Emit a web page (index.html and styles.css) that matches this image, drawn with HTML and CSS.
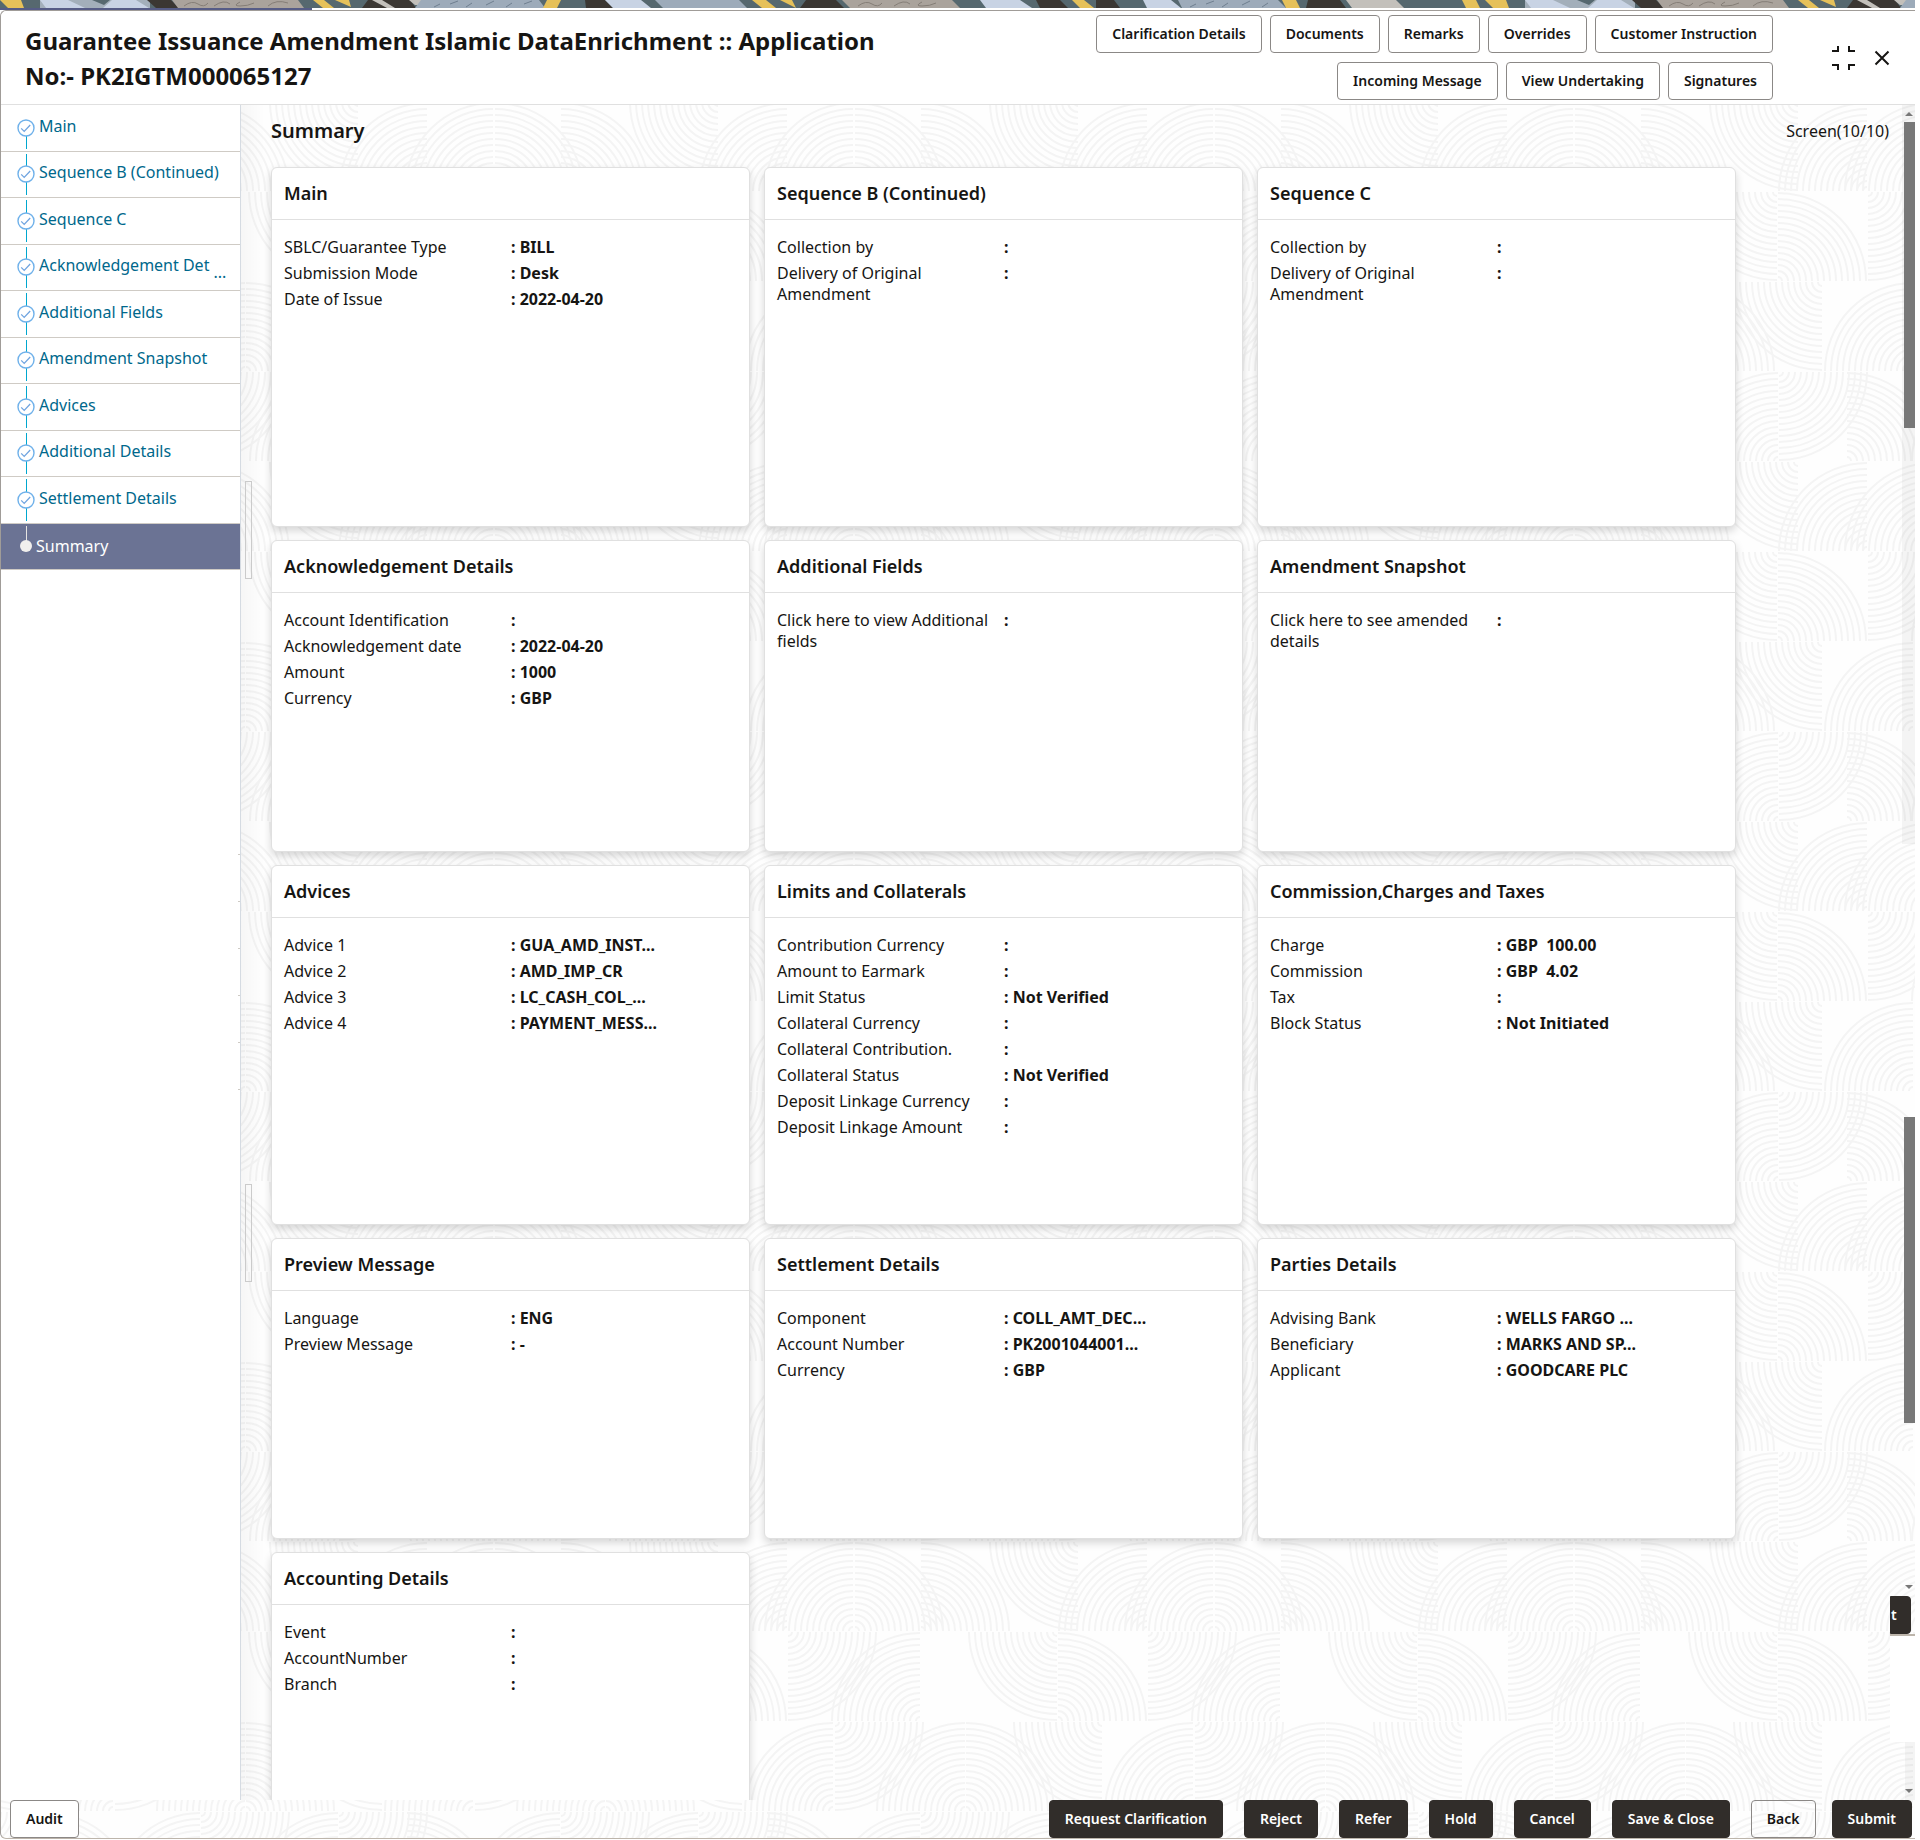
FILE: index.html
```html
<!DOCTYPE html>
<html lang="en">
<head>
<meta charset="utf-8">
<title>Guarantee Issuance Amendment Islamic</title>
<link rel="stylesheet" href="styles.css">
</head>
<body>
<svg class="defs" width="0" height="0" aria-hidden="true">
  <symbol id="done" viewBox="0 0 18 18">
    <circle cx="9" cy="9" r="8" fill="#fff" stroke="#6fb1ea" stroke-width="1.4"/>
    <path d="M4.2 9.4l3 3 6-6.4" fill="none" stroke="#6fa4e0" stroke-width="1.3"/>
  </symbol>
</svg>

<div class="banner" aria-hidden="true">
  <svg width="100%" height="8">
    <defs>
      <g id="art">
        <path fill="#a3afba" d="M40 0h110v8H40z"/>
        <path fill="#e6c15a" d="M0 0h21l3 8H8z"/>
        <path fill="#c8d3e4" d="M40 0h28l17 8H46zM112 0h24l13 8h-46z"/>
        <path fill="#56686f" d="M92 0h18l-6 5z"/>
        <path fill="#3b3733" d="M147 0h24l8 8h-23z"/>
        <path fill="#aaa39c" d="M172 0h126l6 8H178z"/>
        <path fill="none" stroke="#857e77" d="M184 6q8-6 14-2t10-1M214 6q10-7 16-2M240 2q-8 4 0 4t14-3M268 6q8-7 20-3"/>
        <path fill="#e6c15a" d="M313 0h11l10 8h-11zM335 0h14l2 7z"/>
        <path fill="#3b3733" d="M368 0h42l6 8h-54z"/>
        <path fill="#c3c0bb" d="M372 0h10l13 8h-8zM409 0h12v5h-6z"/>
        <path fill="#9dabba" d="M421 0h118l6 8H415z"/>
        <path stroke="#6f7f90" d="M434 7l6-3M450 4l8-3M466 7l6-4M486 5l8-4M506 7l6-4M524 4l8-3"/>
        <path fill="#e6c15a" d="M547 0h14l-4 8h-14z"/>
        <path fill="#3b3733" d="M585 0h20l8 8h-27z"/>
        <path fill="#c8d3e4" d="M605 0h36l10 8h-38z"/>
        <path fill="#9dabba" d="M655 0h84l8 8h-84z"/>
        <path fill="#e6c15a" d="M752 0h14l10 8h-14zM780 0h12l4 8z"/>
        <path fill="#3b3733" d="M806 0h30l8 8h-44z"/>
        <path fill="#aaa39c" d="M842 0h110l8 8H850z"/>
        <path fill="none" stroke="#857e77" d="M858 6q8-6 14-2t10-1M894 6q10-7 16-2M922 2q-8 4 0 4t14-3"/>
        <path fill="#c8d3e4" d="M980 0h40l12 8h-46z"/>
        <path fill="#3b3733" d="M1036 0h24l8 8h-28z"/>
        <path fill="#e6c15a" d="M1072 0h12l10 8h-14z"/>
        <path fill="#3b3733" d="M1096 0h18l6 8h-24z"/>
        <path fill="#c8d3e4" d="M1143 0h28l10 8h-34z"/>
        <path fill="#9dabba" d="M1178 0h100l8 8h-104z"/>
        <path stroke="#6f7f90" d="M1190 7l6-3M1206 4l8-3M1222 7l6-4M1242 5l8-4M1262 7l6-4"/>
        <path fill="#e6c15a" d="M1282 0h14l4 8h-14z"/>
        <path fill="#3b3733" d="M1308 0h32l6 8h-40z"/>
        <path fill="#c3c0bb" d="M1346 0h50l8 8h-52z"/>
        <path fill="#e6c15a" d="M1462 0h14l4 8h-14z"/>
      </g>
    </defs>
    <rect width="100%" height="8" fill="#56686f"/>
    <use href="#art"/>
    <use href="#art" x="1485"/>
  </svg>
</div>

<div class="window">
  <header class="top">
    <h1>Guarantee Issuance Amendment Islamic DataEnrichment :: Application No:- PK2IGTM000065127</h1>
    <div class="actions">
      <button class="btn">Clarification Details</button>
      <button class="btn">Documents</button>
      <button class="btn">Remarks</button>
      <button class="btn">Overrides</button>
      <button class="btn">Customer Instruction</button>
      <button class="btn">Incoming Message</button>
      <button class="btn">View Undertaking</button>
      <button class="btn">Signatures</button>
    </div>
    <div class="tools">
      <button class="tool" aria-label="Collapse">
        <svg width="24" height="24" viewBox="0 0 24 24" fill="none" stroke="#161513" stroke-width="2"><path d="M6 0v5H0M17 0v5h6M0 19h6v5M23 19h-6v5"/></svg>
      </button>
      <button class="tool" aria-label="Close">
        <svg width="16" height="16" viewBox="0 0 16 16" fill="none" stroke="#161513" stroke-width="2"><path d="M1.500 1.500l13 13M14.500 1.500l-13 13"/></svg>
      </button>
    </div>
  </header>

  <div class="middle">
    <nav class="side">
      <ol class="steps">
        <li><svg class="mark"><use href="#done"/></svg><a href="#main">Main</a></li>
        <li><svg class="mark"><use href="#done"/></svg><a href="#seqb">Sequence B (Continued)</a></li>
        <li><svg class="mark"><use href="#done"/></svg><a href="#seqc">Sequence C</a></li>
        <li><svg class="mark"><use href="#done"/></svg><a href="#ack">Acknowledgement Det</a><span class="more">...</span></li>
        <li><svg class="mark"><use href="#done"/></svg><a href="#fields">Additional Fields</a></li>
        <li><svg class="mark"><use href="#done"/></svg><a href="#snap">Amendment Snapshot</a></li>
        <li><svg class="mark"><use href="#done"/></svg><a href="#advices">Advices</a></li>
        <li><svg class="mark"><use href="#done"/></svg><a href="#limits">Additional Details</a></li>
        <li><svg class="mark"><use href="#done"/></svg><a href="#settle">Settlement Details</a></li>
        <li class="current"><span class="dot"></span><a href="#summary" aria-current="step">Summary</a></li>
      </ol>
      <span class="ticks"></span>
    </nav>

    <main class="content" id="summary">
      <div class="heading">
        <h2>Summary</h2>
        <span>Screen(10/10)</span>
      </div>
      <div class="cards">
        <section class="card" id="main"><h3>Main</h3>
          <dl>
            <div><dt>SBLC/Guarantee Type</dt><dd>: BILL</dd></div>
            <div><dt>Submission Mode</dt><dd>: Desk</dd></div>
            <div><dt>Date of Issue</dt><dd>: 2022-04-20</dd></div>
          </dl></section>
        <section class="card" id="seqb"><h3>Sequence B (Continued)</h3>
          <dl>
            <div><dt>Collection by</dt><dd>:</dd></div>
            <div><dt>Delivery of Original Amendment</dt><dd>:</dd></div>
          </dl></section>
        <section class="card" id="seqc"><h3>Sequence C</h3>
          <dl>
            <div><dt>Collection by</dt><dd>:</dd></div>
            <div><dt>Delivery of Original Amendment</dt><dd>:</dd></div>
          </dl></section>
        <section class="card" id="ack"><h3>Acknowledgement Details</h3>
          <dl>
            <div><dt>Account Identification</dt><dd>:</dd></div>
            <div><dt>Acknowledgement date</dt><dd>: 2022-04-20</dd></div>
            <div><dt>Amount</dt><dd>: 1000</dd></div>
            <div><dt>Currency</dt><dd>: GBP</dd></div>
          </dl></section>
        <section class="card" id="fields"><h3>Additional Fields</h3>
          <dl>
            <div><dt>Click here to view Additional fields</dt><dd>:</dd></div>
          </dl></section>
        <section class="card" id="snap"><h3>Amendment Snapshot</h3>
          <dl>
            <div><dt>Click here to see amended details</dt><dd>:</dd></div>
          </dl></section>
        <section class="card" id="advices"><h3>Advices</h3>
          <dl>
            <div><dt>Advice 1</dt><dd>: GUA_AMD_INST...</dd></div>
            <div><dt>Advice 2</dt><dd>: AMD_IMP_CR</dd></div>
            <div><dt>Advice 3</dt><dd>: LC_CASH_COL_...</dd></div>
            <div><dt>Advice 4</dt><dd>: PAYMENT_MESS...</dd></div>
          </dl></section>
        <section class="card" id="limits"><h3>Limits and Collaterals</h3>
          <dl>
            <div><dt>Contribution Currency</dt><dd>:</dd></div>
            <div><dt>Amount to Earmark</dt><dd>:</dd></div>
            <div><dt>Limit Status</dt><dd>: Not Verified</dd></div>
            <div><dt>Collateral Currency</dt><dd>:</dd></div>
            <div><dt>Collateral Contribution.</dt><dd>:</dd></div>
            <div><dt>Collateral Status</dt><dd>: Not Verified</dd></div>
            <div><dt>Deposit Linkage Currency</dt><dd>:</dd></div>
            <div><dt>Deposit Linkage Amount</dt><dd>:</dd></div>
          </dl></section>
        <section class="card"><h3>Commission,Charges and Taxes</h3>
          <dl>
            <div><dt>Charge</dt><dd>: GBP  100.00</dd></div>
            <div><dt>Commission</dt><dd>: GBP  4.02</dd></div>
            <div><dt>Tax</dt><dd>:</dd></div>
            <div><dt>Block Status</dt><dd>: Not Initiated</dd></div>
          </dl></section>
        <section class="card"><h3>Preview Message</h3>
          <dl>
            <div><dt>Language</dt><dd>: ENG</dd></div>
            <div><dt>Preview Message</dt><dd>: -</dd></div>
          </dl></section>
        <section class="card" id="settle"><h3>Settlement Details</h3>
          <dl>
            <div><dt>Component</dt><dd>: COLL_AMT_DEC...</dd></div>
            <div><dt>Account Number</dt><dd>: PK2001044001...</dd></div>
            <div><dt>Currency</dt><dd>: GBP</dd></div>
          </dl></section>
        <section class="card"><h3>Parties Details</h3>
          <dl>
            <div><dt>Advising Bank</dt><dd>: WELLS FARGO ...</dd></div>
            <div><dt>Beneficiary</dt><dd>: MARKS AND SP...</dd></div>
            <div><dt>Applicant</dt><dd>: GOODCARE PLC</dd></div>
          </dl></section>
        <section class="card"><h3>Accounting Details</h3>
          <dl>
            <div><dt>Event</dt><dd>:</dd></div>
            <div><dt>AccountNumber</dt><dd>:</dd></div>
            <div><dt>Branch</dt><dd>:</dd></div>
          </dl></section>
      </div>
      <span class="handle handle-a"></span>
      <span class="handle handle-b"></span>
      <div class="scroll" aria-hidden="true">
        <span class="track"></span>
        <span class="track track-end"></span>
        <span class="arrow up"></span>
        <span class="thumb thumb-a"></span>
        <span class="thumb thumb-b"></span>
        <span class="arrow mid"></span>
        <span class="arrow end"></span>
      </div>
      <div class="patch">
        <button class="btn dark cut" tabindex="-1">t</button>
      </div>
    </main>
  </div>

  <footer class="bottom">
    <button class="btn audit">Audit</button>
    <button class="btn dark">Request Clarification</button>
    <button class="btn dark">Reject</button>
    <button class="btn dark">Refer</button>
    <button class="btn dark">Hold</button>
    <button class="btn dark">Cancel</button>
    <button class="btn dark">Save &amp; Close</button>
    <button class="btn">Back</button>
    <button class="btn dark submit">Submit</button>
  </footer>
</div>
</body>
</html>
```
FILE: styles.css
```css
* { box-sizing: border-box; }

:root {
  --ink: #161513;
  --line: #e0e0e0;
  --waves: url("data:image/svg+xml,%3Csvg xmlns='http://www.w3.org/2000/svg' width='360' height='360' fill='none' stroke='%23f4f4f4' stroke-width='2'%3E%3Cdefs%3E%3Cpath id='q' d='M4 0A4 4 0 0 1 0 4M10 0A10 10 0 0 1 0 10M16 0A16 16 0 0 1 0 16M22 0A22 22 0 0 1 0 22M28 0A28 28 0 0 1 0 28M34 0A34 34 0 0 1 0 34M40 0A40 40 0 0 1 0 40M46 0A46 46 0 0 1 0 46M52 0A52 52 0 0 1 0 52M58 0A58 58 0 0 1 0 58M64 0A64 64 0 0 1 0 64M70 0A70 70 0 0 1 0 70M76 0A76 76 0 0 1 0 76M82 0A82 82 0 0 1 0 82M88 0A88 88 0 0 1 0 88'/%3E%3Cg id='lr'%3E%3Cuse href='%23q'/%3E%3C/g%3E%3Cg id='ll'%3E%3Cuse href='%23q' transform='rotate(90)'/%3E%3C/g%3E%3Cg id='ul'%3E%3Cuse href='%23q' transform='rotate(180)'/%3E%3C/g%3E%3Cg id='ur'%3E%3Cuse href='%23q' transform='rotate(270)'/%3E%3C/g%3E%3Cg id='t'%3E%3Cuse href='%23ur' x='201' y='89'/%3E%3Cuse href='%23ll' x='358' y='0'/%3E%3Cuse href='%23ul' x='67' y='89'/%3E%3Cuse href='%23ul' x='133' y='89'/%3E%3Cuse href='%23ur' x='135' y='89'/%3E%3Cuse href='%23ll' x='337' y='90'/%3E%3Cuse href='%23ur' x='338' y='179'/%3E%3Cuse href='%23lr' x='68' y='90'/%3E%3Cuse href='%23ul' x='200' y='179'/%3E%3Cuse href='%23ul' x='245' y='269'/%3E%3Cuse href='%23ur' x='246' y='269'/%3E%3Cuse href='%23ll' x='22' y='180'/%3E%3Cuse href='%23ul' x='113' y='269'/%3E%3Cuse href='%23lr' x='115' y='180'/%3E%3Cuse href='%23ul' x='200' y='359'/%3E%3Cuse href='%23lr' x='201' y='270'/%3E%3Cuse href='%23ul' x='338' y='359'/%3E%3Cuse href='%23lr' x='339' y='270'/%3E%3Cuse href='%23ur' x='47' y='359'/%3E%3C/g%3E%3C/defs%3E%3Cuse href='%23t'/%3E%3Cuse href='%23t' x='360'/%3E%3Cuse href='%23t' x='-360'/%3E%3C/svg%3E");
}

body {
  margin: 0;
  height: 100vh;
  min-height: 900px;
  display: flex;
  flex-direction: column;
  overflow: hidden;
  background: #fff;
  color: var(--ink);
  font: 16px/21px "Noto Sans", "Open Sans", sans-serif;
}

.defs { position: absolute; }

.banner {
  flex: none;
  height: 10px;
  padding-right: 5px;
  background: linear-gradient(90deg, #565c86 312px, #fff 312px);
}
.banner svg { display: block; }

.window {
  flex: 1;
  min-height: 0;
  display: flex;
  flex-direction: column;
  margin: 0 5px 1px 0;
  border: 1px solid #a09c98;
  border-right: 0;
  border-radius: 6px 0 0 6px;
  border-bottom-color: #bdb5ab;
  background: #fefefe var(--waves) -1px 91px;
}

.top {
  flex: none;
  display: flex;
  align-items: center;
  min-height: 94px;
  padding-left: 24px;
  border-bottom: 1px solid var(--line);
  border-radius: 6px 0 0 0;
  background: #fff;
}
h1 {
  flex: 1;
  margin: 0;
  padding-right: 180px;
  font-size: 24px;
  line-height: 35px;
  font-weight: 700;
}
.actions {
  flex: none;
  width: 690px;
  display: flex;
  flex-wrap: wrap;
  justify-content: flex-end;
  gap: 9px 8px;
}
.btn {
  height: 38px;
  padding: 0 15px;
  border: 1px solid #8b8886;
  border-radius: 4px;
  background: #fff;
  color: var(--ink);
  font: 600 14px/18px "Noto Sans", "Open Sans", sans-serif;
  white-space: nowrap;
}
.dark {
  border-color: #312d2a;
  background: #312d2a;
  color: #fff;
}
.tools {
  display: flex;
  align-items: center;
  gap: 18px;
  width: 142px;
  padding-left: 59px;
}
.tool {
  display: flex;
  padding: 0;
  border: 0;
  background: none;
}

.middle {
  flex: 1;
  min-height: 0;
  display: flex;
}
.side {
  position: relative;
  flex: none;
  width: 240px;
  border-right: 1px solid #d5dbe2;
  background: #fff;
}
.steps {
  display: grid;
  grid-auto-rows: 1fr;
  height: 465px;
  margin: 0;
  padding: 0;
  list-style: none;
}
.steps li {
  display: flex;
  align-items: center;
  gap: 4px;
  padding-left: 16px;
  border-bottom: 1px solid #cfcbc5;
  background: linear-gradient(#00a7cf, #00a7cf) 25px 2px / 1px calc(100% - 4px) no-repeat;
}
.steps li:first-child { background-position-y: 24px; background-size: 1px 20px; }
.steps a {
  padding-bottom: 3px;
  color: #00688c;
  text-decoration: none;
}
.mark { width: 18px; height: 18px; flex: none; }
.more { align-self: flex-end; padding-bottom: 7px; color: #00688c; }
.steps .current {
  gap: 4px;
  padding-left: 19px;
  background: linear-gradient(#e6e4e2, #e6e4e2) 25px 2px / 1px 16px no-repeat #6b7394;
}
.dot { width: 12px; height: 12px; border-radius: 50%; background: #f1efed; }
.steps .current a { padding: 0; color: #fff; }
.ticks {
  position: absolute;
  right: 0;
  top: 749px;
  width: 2px;
  height: 281px;
  background: repeating-linear-gradient(#cfcbc5 0 1px, transparent 1px 47px);
}

.content {
  position: relative;
  flex: 1;
  min-width: 0;
  overflow: hidden;
  padding: 0 0 0 30px;
  background: linear-gradient(90deg, rgba(0, 0, 0, .03), transparent 24px);
}
.heading {
  display: flex;
  justify-content: space-between;
  align-items: center;
  height: 62px;
  padding: 0 26px 10px 0;
}
h2 { margin: 0; font-size: 20px; line-height: 28px; font-weight: 600; }
.cards {
  display: grid;
  grid-template-columns: repeat(3, 1fr);
  grid-template-rows: 360px 312px 360px 301px 360px;
  gap: 13px 14px;
  margin-right: 179px;
}
.card {
  min-width: 0;
  border: 1px solid var(--line);
  border-radius: 6px;
  background: #fff;
  box-shadow: 0 4px 8px rgba(0, 0, 0, .16);
}
h3 {
  margin: 0;
  padding: 12px;
  border-bottom: 1px solid var(--line);
  font-size: 18px;
  line-height: 27px;
  font-weight: 600;
}
dl {
  display: flex;
  flex-direction: column;
  gap: 5px;
  margin: 0;
  padding: 17px 12px;
}
dl div { display: flex; }
dt { flex: none; width: 227px; padding-right: 8px; }
dd { margin: 0; font-weight: 700; white-space: pre; }

.handle {
  position: absolute;
  left: 4px;
  width: 7px;
  height: 98px;
  border: 1px solid #cbcbcb;
}
.handle-a { top: 376px; }
.handle-b { top: 1079px; }

.scroll {
  position: absolute;
  top: 0;
  right: 0;
  bottom: 0;
  width: 13px;
}
.scroll span { position: absolute; right: 0; }
.track { top: 0; width: 13px; height: 739px; background: rgba(0, 0, 0, .04); }
.scroll .track-end { top: auto; bottom: 0; height: 58px; width: 10px; }
.thumb { width: 11px; height: 306px; background: #787878; }
.thumb-a { top: 17px; }
.thumb-b { top: 1012px; }
.scroll .arrow {
  right: 2px;
  border: 4px solid transparent;
  border-top: 4px solid #787878;
  border-bottom: 0;
}
.scroll .up { top: 7px; border-top: 0; border-bottom: 4px solid #787878; }
.mid { top: 1480px; }
.end { bottom: 7px; }

.patch {
  position: absolute;
  top: 1491px;
  right: 0;
  width: 25px;
  height: 146px;
  overflow: hidden;
  background: linear-gradient(transparent 38px, #bdb5ab 38px 40px, #fff 40px);
}
.cut {
  width: 21px;
  padding: 0;
  border-radius: 0 4px 4px 0;
  text-align: left;
}

.bottom {
  flex: none;
  display: flex;
  gap: 21px;
  padding: 0 3px 0 9px;
}
.bottom .btn { background-color: transparent; }
.bottom .dark { background-color: #312d2a; }
.bottom .audit { margin-right: auto; background-color: #fff; }
.bottom .submit { margin-left: -5px; }
```
